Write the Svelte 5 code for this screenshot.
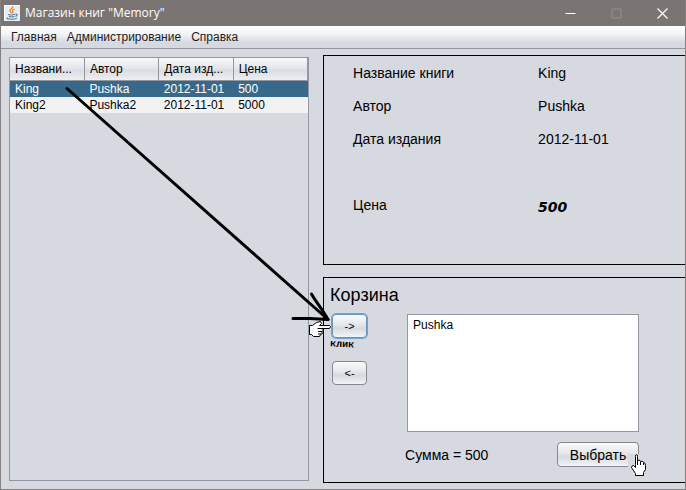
<script>
  const menus = ['Главная', 'Администрирование', 'Справка'];
  const columns = ['Названи...', 'Автор', 'Дата изд...', 'Цена'];
  const books = [
    { title: 'King', author: 'Pushka', date: '2012-11-01', price: 500 },
    { title: 'King2', author: 'Pushka2', date: '2012-11-01', price: 5000 }
  ];
  let selected = $state(0);
  let basket = $state(['Pushka']);
  let book = $derived(books[selected]);
</script>

<div class="window">
  <header class="titlebar">
    <svg class="logo" width="16" height="16" viewBox="0 0 16 16" aria-hidden="true">
      <rect width="16" height="16" fill="#e9edf1" />
      <path d="M0.5 15.5V0.5H15.5" fill="none" stroke="#fafcff" />
      <g fill="none" stroke="#ee8225" stroke-width="1.3">
        <path d="M8.8 1.2C9.6 3.4 5.4 4.2 6 6.2 6.2 7 7.4 7.4 7.4 8.4" />
        <path d="M10.6 4C8.2 5 8.2 5.8 8.8 6.6 9.3 7.3 8.8 8 8.5 8.4" />
      </g>
      <g fill="none" stroke="#4c7ba3" stroke-width="1.1">
        <path d="M4 9.4C5 10.2 9.5 10.1 11 9.3M5 11.3C6.5 12 9 11.9 10.4 11.3" />
        <path d="M11.3 9C13.8 8.7 13.6 11 11.4 11.4M3.8 12.8C1.6 13.6 4 14.2 7.5 14.2 11 14.2 13 13.6 12.4 13" />
      </g>
    </svg>
    <h1>Магазин книг "Memory"</h1>
    <div class="controls">
      <button type="button" aria-label="Свернуть">
        <svg width="11" height="11" viewBox="0 0 11 11"><path d="M0.5 5.5h10" stroke="#fff" /></svg>
      </button>
      <button type="button" aria-label="Развернуть" disabled>
        <svg width="11" height="11" viewBox="0 0 11 11"><path d="M1 1h9v9h-9z" fill="none" stroke="#968f8f" /></svg>
      </button>
      <button type="button" aria-label="Закрыть">
        <svg width="11" height="11" viewBox="0 0 11 11"><path d="M.5 .5l10 10M10.5 .5l-10 10" stroke="#fff" stroke-width="1.2" /></svg>
      </button>
    </div>
  </header>

  <nav>
    {#each menus as menu}<button type="button">{menu}</button>{/each}
  </nav>

  <main>
    <section class="books">
      <table>
        <thead>
          <tr>{#each columns as column}<th>{column}</th>{/each}</tr>
        </thead>
        <tbody>
          {#each books as item, i}
            <tr class:selected={i === selected} onclick={() => (selected = i)}>
              <td>{item.title}</td><td>{item.author}</td><td>{item.date}</td><td>{item.price}</td>
            </tr>
          {/each}
        </tbody>
      </table>
    </section>

    <div class="side">
      <dl class="panel details">
        <dt>Название книги</dt><dd>{book.title}</dd>
        <dt>Автор</dt><dd>{book.author}</dd>
        <dt>Дата издания</dt><dd>{book.date}</dd>
        <dt class="last">Цена</dt><dd class="last price">{book.price}</dd>
      </dl>

      <section class="panel basket">
        <h2 id="basket-title">Корзина</h2>
        <div class="transfer">
          <div class="moves">
            <button type="button" class="push focused">-&gt;</button>
            <button type="button" class="push">&lt;-</button>
          </div>
          <select size="6" aria-labelledby="basket-title">
            {#each basket as item}<option>{item}</option>{/each}
          </select>
        </div>
        <div class="total">
          <output>Сумма = 500</output>
          <button type="button" class="push choose">Выбрать</button>
        </div>
      </section>
    </div>
  </main>

  <svg class="notes" width="686" height="490" viewBox="0 0 686 490" aria-hidden="true">
    <g fill="none" stroke="#000" stroke-width="3" stroke-linecap="round">
      <path d="M67 88.5L328 319.5" />
      <path d="M311.500 294C316 302 322 309 328 319.500M293 318.500L310 318.500 328 319.500" />
    </g>
    <path d="M309.500 325.500L312.500 325.500 316.500 322.500 320.500 321.500 321.500 323.500 319.500 325.500 329.500 325.500 330.500 326.500 329.500 328.500 322.500 328.500 323.500 330.500 321.500 331.500 322.500 333.500 320.500 334.500 319.500 336.500 313.500 336.500 311.500 334.500 309.500 334.500z" fill="#fff" stroke="#000" />
    <path d="M317.500 328.500h6M318 331.500h4M318 334h3" stroke="#000" />
    <path d="M628 454h11v14h-11z" fill="#d6d9df" />
    <path d="M635.500 464.500V456.500Q635.500 454.500 636.500 454.500T637.500 456.500V460.500Q640.500 459.500 640.500 461.500 643.500 460.500 643.500 462.500 645.500 462.500 645.500 465.500V469.500L643.500 472.500V475.500H635.500V473.500L631.500 467.500Q631.500 465.500 633.500 465.500L635.500 467.500z" fill="#fff" stroke="#000" />
    <path d="M637.500 460v5M640.500 462v3M643.500 463v2" stroke="#000" />
  </svg>
  <span class="click">клик</span>
</div>

<style>
  :global(body) { margin: 0; }
  * { box-sizing: border-box; }
  .window {
    position: relative;
    display: flex;
    flex-direction: column;
    min-height: 100vh;
    overflow: hidden;
    border: 1px solid #857f7f;
    border-top: 0;
    background: #d6d9e0;
    color: #000;
    font: 12px/16px "Liberation Sans", Arial, sans-serif;
  }
  button, select { font: inherit; color: inherit; }
  .titlebar {
    display: flex;
    align-items: center;
    height: 26px;
    padding-left: 3px;
    background: #7a7473;
    color: #fff;
  }
  h1 { margin: 0 0 0 5px; font: 12px/16px "Open Sans", "Noto Sans", sans-serif; }
  .controls { display: flex; margin-left: auto; }
  .controls button {
    display: grid;
    place-items: center;
    width: 46px;
    height: 26px;
    padding: 0;
    border: 0;
    background: none;
  }
  nav {
    display: flex;
    gap: 10px;
    height: 23px;
    padding: 0 10px;
    border-bottom: 1px solid #9297a1;
    background: linear-gradient(#fff, #f4f5f7 35%, #d6d9e0 75%);
  }
  nav button { padding: 0; border: 0; background: none; color: #1c1c1c; }
  main { display: flex; flex: 1; gap: 14px; padding: 6px 0 6px 8px; }
  .books { flex: 299 1 0; margin: 2px 0; border: 1px solid #9297a1; }
  table { width: 100%; border-collapse: collapse; table-layout: fixed; }
  th, td { padding: 0 0 0 5px; text-align: left; font-weight: normal; white-space: nowrap; }
  th {
    height: 22px;
    border-right: 1px solid #9297a1;
    border-bottom: 1px solid #9297a1;
    background: linear-gradient(#f7f8fa, #e4e6eb 45%, #d9dce2 55%, #eceef1);
  }
  td { height: 16px; background: #f2f2f2; }
  .selected td { background: #39698a; color: #fff; }
  .side { display: flex; flex: 363 1 0; flex-direction: column; gap: 12px; font-size: 14px; }
  .panel { margin: 0; border: 1px solid #000; border-right: 0; }
  .details {
    display: grid;
    grid-template-columns: 185px 1fr;
    grid-template-rows: repeat(5, 33px);
    align-items: center;
    height: 210px;
    padding-left: 29px;
  }
  dd { margin: 0; }
  .last { grid-row: 5; }
  .price { padding-top: 4px; font: italic bold 14px/16px "DejaVu Sans", sans-serif; }
  .basket { flex: 1; padding: 5px 46px 5px 6px; }
  h2 { margin: 0; font-size: 18px; font-weight: normal; line-height: 24px; }
  .transfer { display: flex; gap: 40px; margin-top: 7px; padding-left: 2px; }
  .moves { display: flex; flex-direction: column; gap: 23px; }
  .push {
    width: 35px;
    height: 24px;
    padding: 0;
    border: 1px solid #85888f;
    border-radius: 4px;
    background: linear-gradient(#fafbfc, #e4e6ea 45%, #d6d9df 60%, #f2f4f7);
    font-size: 11px;
  }
  .focused { border-color: #6b93b8; box-shadow: 0 0 0 1px #73a4d1; }
  select {
    flex: 1;
    min-width: 0;
    height: 118px;
    padding: 3px 0;
    border: 1px solid #9297a1;
    border-radius: 0;
    background: #fff;
    font-size: 12px;
    outline: 0;
  }
  option { padding: 0 5px; line-height: 16px; }
  .total { display: flex; align-items: center; justify-content: space-between; margin-top: 10px; padding-left: 75px; }
  .choose { width: 82px; height: 25px; font-size: 14px; }
  .notes { position: absolute; top: 0; left: -1px; pointer-events: none; }
  .click {
    position: absolute;
    top: 339px;
    left: 329px;
    font: bold 10px/12px "Liberation Mono", monospace;
    transform: rotate(3deg);
  }
</style>
